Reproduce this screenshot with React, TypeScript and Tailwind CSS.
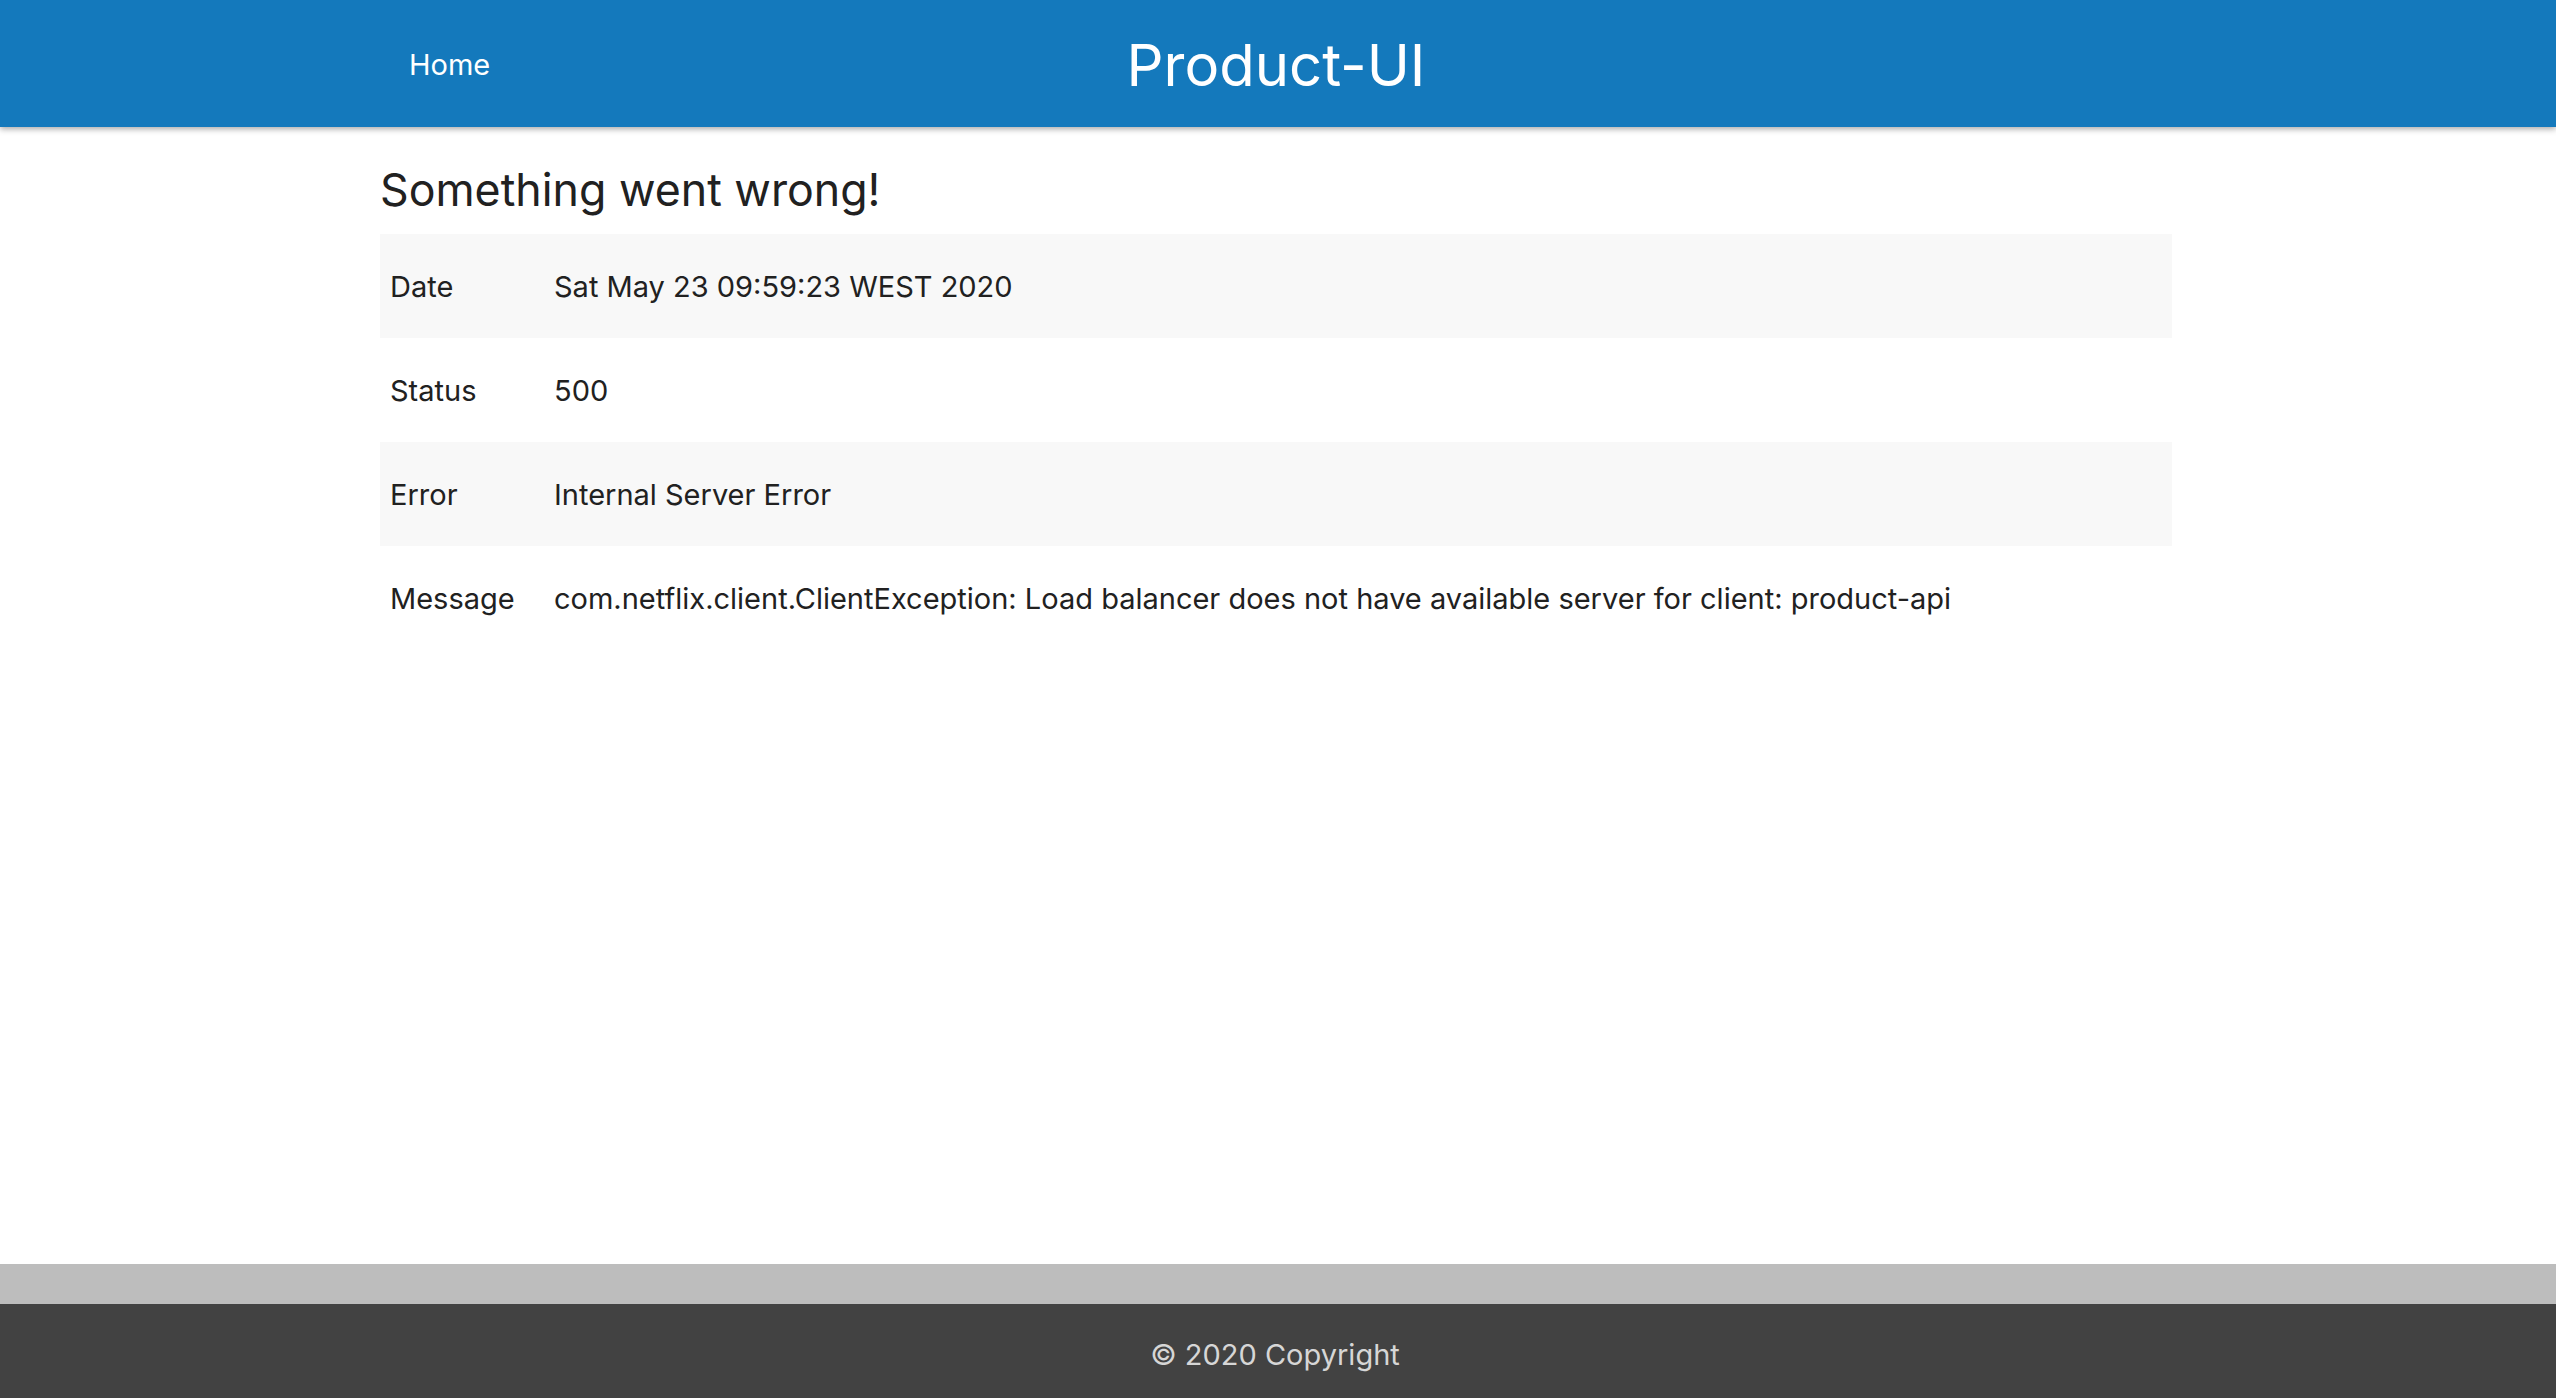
import React from "react";

const rows: [string, string][] = [
  ["Date", "Sat May 23 09:59:23 WEST 2020"],
  ["Status", "500"],
  ["Error", "Internal Server Error"],
  ["Message", "com.netflix.client.ClientException: Load balancer does not have available server for client: product-api"],
];

export default function App() {
  return (
    <div className="flex min-h-[1398px] flex-col bg-white text-[#212121]" style={{ fontFamily: "Inter, 'Noto Sans', sans-serif" }}>
      <header className="relative z-10 h-[127px] bg-[#1479bc] shadow-[0_2px_6px_rgba(0,0,0,0.35)]">
        <div className="mx-auto grid h-full w-[1796px] grid-cols-[1fr_auto_1fr] items-center pr-[4px]">
          <div className="pl-[29px] pt-[3px]">
            <a className="text-[29px] text-white">Home</a>
          </div>
          <h1 className="pt-[2px] text-[58px] font-normal leading-none text-white">Product-UI</h1>
          <div />
        </div>
      </header>
      <main className="mx-auto w-[1796px] flex-1 pr-[4px]">
        <h2 className="mt-[35px] mb-[16px] text-[44.7px] font-normal leading-[56px]">Something went wrong!</h2>
        <table className="w-full border-collapse text-[29px]">
          <tbody>
            {rows.map(([k, v], i) => (
              <tr key={k} className={i % 2 === 0 ? "bg-[#f8f8f8]" : "bg-white"}>
                <td className="h-[104px] w-[164px] pl-[10px] pt-[2px] align-middle">{k}</td>
                <td className="h-[104px] pl-[10px] pt-[2px] align-middle">{v}</td>
              </tr>
            ))}
          </tbody>
        </table>
      </main>
      <div className="h-[40px] bg-[#bdbdbd]" />
      <footer className="flex h-[94px] items-center justify-center bg-[#424242] pt-[8px] pr-[6px] text-[29px] text-[#d6d6d6]">
        © 2020 Copyright
      </footer>
    </div>
  );
}
